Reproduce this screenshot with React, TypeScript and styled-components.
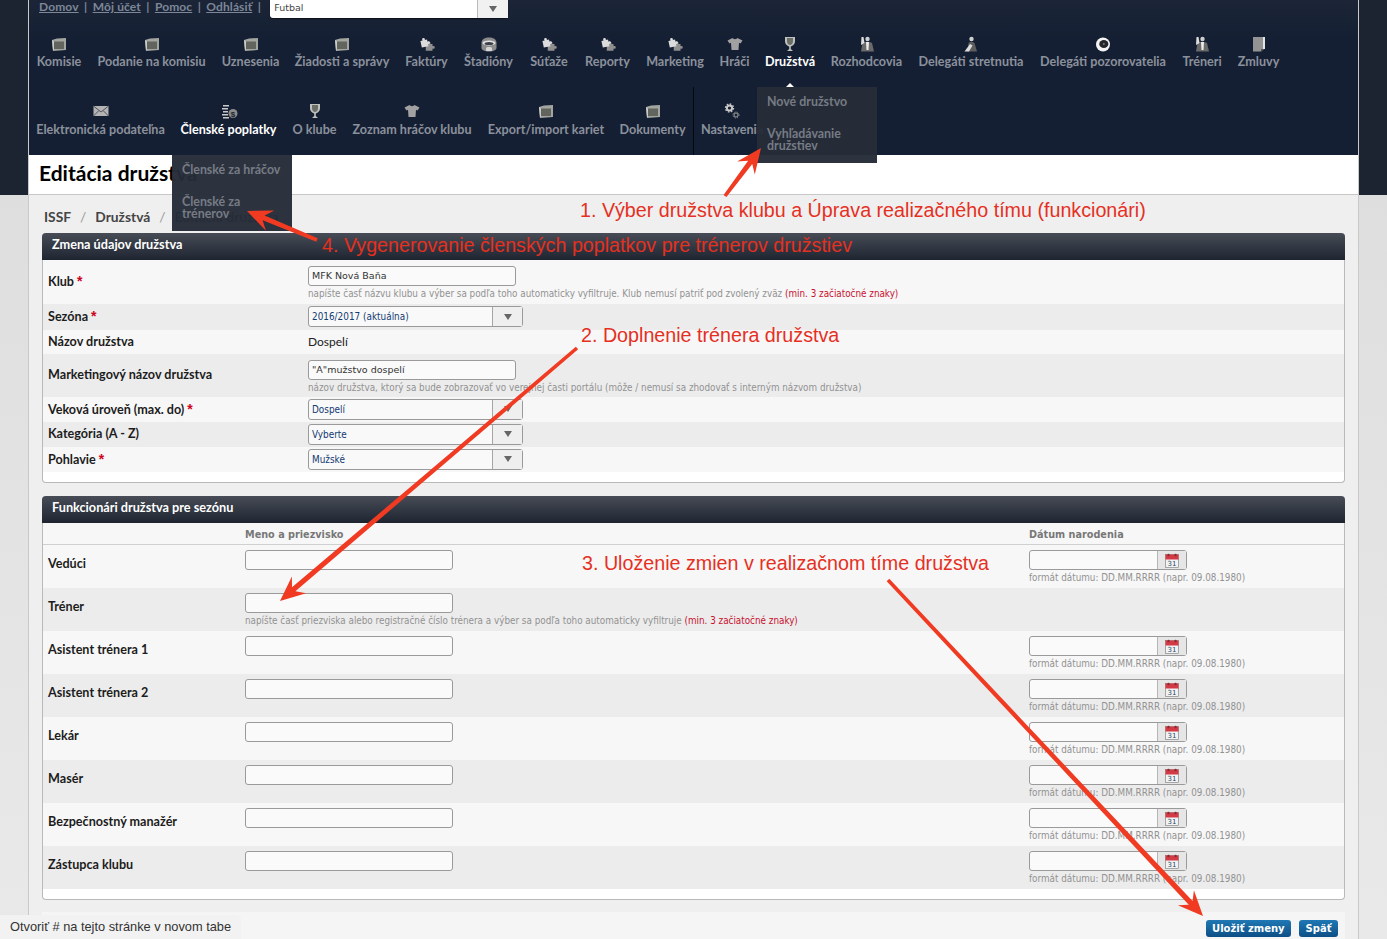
import React from 'react';
import styled, { createGlobalStyle } from 'styled-components';

const Global = createGlobalStyle`
  html, body { margin: 0; padding: 0; height: 939px; overflow: hidden; }
  body { font-family: Lato, "Noto Sans", sans-serif; }
`;

const hintFont = '"DejaVu Sans Condensed", "DejaVu Sans", sans-serif';

const Page = styled.div`
  position: relative;
  width: 1387px;
  height: 939px;
  overflow: hidden;
  background: linear-gradient(#1c2431 0, #1c2431 195px, #dedede 195px, #e9e9e9 100%);
`;

const Container = styled.div`
  width: 1329px;
  height: 939px;
  margin: 0 29px;
  background: #efefef;
  box-shadow: 1px 0 0 #c9c9c9, -1px 0 0 #c9c9c9;
`;

/* header */
const Header = styled.header`
  height: 155px;
  padding-left: 8px;
  background: linear-gradient(#1b2537, #151f33 40px);
  box-sizing: border-box;
`;

const TopBar = styled.div`
  display: flex;
  align-items: flex-start;
  height: 20px;
  padding-left: 2px;
  color: #7d8798;
  font-size: 12px;
  font-weight: 700;
`;

const TopLink = styled.a`
  color: #7d8798;
  text-decoration: underline;
  line-height: 13px;
  letter-spacing: 0.12px;
`;

const TopSep = styled.span`
  width: 14px;
  text-align: center;
  line-height: 13px;
`;

const SportSelect = styled.div`
  display: flex;
  width: 238px;
  height: 18px;
  margin-left: 4px;
  background: #fff;
  border-radius: 0 0 3px 3px;
  color: #444;
  font: 9.5px "DejaVu Sans", sans-serif;
  line-height: 15px;
  box-shadow: 0 1px 1px rgba(0, 0, 0, 0.5);
`;

const SportValue = styled.div`
  flex: 1;
  padding-left: 4px;
`;

const SportArrow = styled.div`
  display: flex;
  align-items: center;
  justify-content: center;
  width: 30px;
  background: #f1f1f1;
  border-left: 1px solid #bbb;
`;

const NavItem = styled.div<{ $w: number; $active?: boolean }>`
  position: relative;
  display: flex;
  flex-direction: column;
  align-items: center;
  flex: none;
  width: ${(p) => p.$w}px;
  color: ${(p) => (p.$active ? '#fff' : '#8b919c')};
  font-size: 12.6px;
  font-weight: 700;
  white-space: nowrap;
`;

const NavIconBox = styled.div<{ $gap: number }>`
  display: flex;
  align-items: center;
  justify-content: center;
  height: 16px;
  margin-bottom: ${(p) => p.$gap}px;
`;

const NavLabel = styled.span`
  line-height: 16px;
`;

const NavRow = styled.nav<{ $h: number }>`
  display: flex;
  gap: 16px;
  height: ${(p) => p.$h}px;
  padding-top: 16px;
  box-sizing: border-box;
`;

const Divider = styled.div`
  flex: none;
  width: 1px;
  height: 68px;
  margin: -16px -8px 0 -8px;
  background: #05080f;
`;

const Caret = styled.div`
  position: absolute;
  left: 21px;
  top: 47px;
  width: 0;
  height: 0;
  border-left: 4px solid transparent;
  border-right: 4px solid transparent;
  border-bottom: 4px solid #fff;
`;

const Dropdown = styled.div<{ $top: number; $h: number }>`
  position: absolute;
  z-index: 5;
  left: -8px;
  top: ${(p) => p.$top}px;
  width: 120px;
  height: ${(p) => p.$h}px;
  padding: 8px 10px 0;
  box-sizing: border-box;
  background: rgba(38, 44, 56, 0.97);
  color: #767b85;
  font-size: 12.4px;
  font-weight: 700;
  white-space: normal;
  text-align: left;
`;

const DropItem = styled.div`
  line-height: 12px;
  margin: 1px 0 20px;
`;

/* title and breadcrumbs */
const TitleBand = styled.div`
  height: 40px;
  padding-left: 10px;
  box-sizing: border-box;
  background: #fff;
  border-bottom: 1px solid #c8c8c8;
  color: #000;
  font-size: 21px;
  font-weight: 700;
  line-height: 36px;
`;

const Body = styled.main`
  padding: 0 13px;
`;

const Crumbs = styled.div`
  display: flex;
  align-items: center;
  gap: 9px;
  height: 38px;
  padding: 4px 0 0 2px;
  box-sizing: border-box;
  color: #444;
  font-size: 13.8px;
  font-weight: 700;
`;

const CrumbSep = styled.span`
  color: #999;
  font-weight: 400;
`;

/* panels */
const Panel = styled.section<{ $mt?: number }>`
  margin-top: ${(p) => p.$mt ?? 0}px;
  padding-bottom: 10px;
  background: #fff;
  border: 1px solid #b9b9b9;
  border-top: 0;
  border-radius: 4px;
`;

const PanelHead = styled.h2`
  height: 27px;
  margin: 0 -1px;
  padding-left: 10px;
  border-radius: 4px 4px 0 0;
  background: linear-gradient(#474c56, #1e2531);
  color: #fff;
  font-size: 12.7px;
  font-weight: 700;
  line-height: 23px;
`;

const FormRow = styled.div<{ $h: number; $alt?: boolean }>`
  display: grid;
  grid-template-columns: 265px 1fr;
  align-items: center;
  height: ${(p) => p.$h}px;
  background: ${(p) => (p.$alt ? '#ececec' : '#f7f7f7')};
`;

const Label = styled.div`
  padding: 0 0 2px 5px;
  color: #1c1c1c;
  font-size: 12.6px;
  font-weight: 700;
`;

const Req = styled.span`
  color: #d0021b;
  font: bold 14px "Liberation Sans", sans-serif;
`;

const FieldStack = styled.div`
  padding-top: 3px;
`;

const Input = styled.div<{ $w: number }>`
  width: ${(p) => p.$w}px;
  height: 20px;
  padding-left: 3px;
  box-sizing: border-box;
  background: #fafafa;
  border: 1px solid #9a9a9a;
  border-radius: 3px;
  color: #333;
  font: 9.5px/18px "DejaVu Sans", sans-serif;
`;

const Hint = styled.div`
  margin-top: 1px;
  color: #929292;
  font: 9.8px/14px ${hintFont};
  white-space: nowrap;
`;

const HintRed = styled.span`
  color: #c8102e;
`;

const Value = styled.div`
  padding-bottom: 2px;
  color: #222;
  font-size: 12px;
`;

const Select = styled.div`
  display: flex;
  width: 215px;
  height: 21px;
  margin-bottom: 1px;
  box-sizing: border-box;
  background: #f9f9f9;
  border: 1px solid #9a9a9a;
  border-radius: 3px;
  color: #123a73;
  font: 9.9px/19px ${hintFont};
`;

const SelectText = styled.div`
  flex: 1;
  padding-left: 3px;
`;

const SelectArrow = styled.div`
  display: flex;
  align-items: center;
  justify-content: center;
  width: 29px;
  background: #efefef;
  border-left: 1px solid #a5a5a5;
`;

const ArrowDown = styled.div`
  width: 0;
  height: 0;
  border-left: 4px solid transparent;
  border-right: 4px solid transparent;
  border-top: 6px solid #666;
`;

/* officials table */
const OfficialsHead = styled.div`
  display: grid;
  grid-template-columns: 202px 784px 1fr;
  height: 22px;
  background: #f7f7f7;
  border-bottom: 1px solid #d0d0d0;
  box-sizing: border-box;
  color: #777;
  font: bold 9.7px/23px "DejaVu Sans", sans-serif;
`;

const OfficialRow = styled.div<{ $alt?: boolean }>`
  display: grid;
  grid-template-columns: 202px 784px 1fr;
  height: 43px;
  padding-top: 5px;
  box-sizing: border-box;
  background: ${(p) => (p.$alt ? '#ececec' : '#f7f7f7')};
`;

const OfficialLabel = styled(Label)`
  padding-top: 6px;
`;

const DateField = styled.div`
  display: flex;
  width: 158px;
  height: 20px;
  box-sizing: border-box;
  background: #fafafa;
  border: 1px solid #9a9a9a;
  border-radius: 3px;
`;

const DateText = styled.div`
  flex: 1;
`;

const DateButton = styled.div`
  display: flex;
  align-items: center;
  justify-content: center;
  width: 28px;
  background: #e6e6e6;
  border-left: 1px solid #b5b5b5;
`;

/* footer */
const Footer = styled.div`
  display: flex;
  justify-content: flex-end;
  gap: 8px;
  height: 27px;
  margin-top: 12px;
  padding: 8px 7px 0 0;
  box-sizing: border-box;
  background: #f5f5f5;
`;

const Button = styled.div`
  height: 17px;
  padding: 0 6.5px;
  background: linear-gradient(#1f78b4, #0d4f86);
  border-radius: 3px;
  color: #fff;
  font: bold 10px/17px "DejaVu Sans", sans-serif;
`;

/* overlays */
const StatusTip = styled.div`
  position: absolute;
  left: 0;
  bottom: 0;
  width: 241px;
  height: 24px;
  padding-left: 10px;
  box-sizing: border-box;
  background: #f2f2f2;
  border-radius: 0 5px 0 0;
  color: #333;
  font: 12.8px/23px "Liberation Sans", sans-serif;
`;

const ArrowLayer = styled.svg`
  position: absolute;
  left: 0;
  top: 0;
  z-index: 10;
  width: 1387px;
  height: 939px;
  pointer-events: none;
`;

const Note = styled.div<{ $x: number; $y: number }>`
  position: absolute;
  z-index: 9;
  left: ${(p) => p.$x}px;
  top: ${(p) => p.$y}px;
  color: #e5301f;
  font: 19.7px/24px "Liberation Sans", Arial, sans-serif;
  white-space: nowrap;
`;

type IconKind =
  | 'folder' | 'puzzle' | 'stadium' | 'shirt' | 'trophy' | 'referee' | 'delegate'
  | 'eye' | 'doc' | 'mail' | 'coins' | 'gears';

const puzzlePiece = 'M1 4 H4 C3.2 2.6 3.8 1 5.5 1 S7.8 2.6 7 4 H10 V7 C11.4 6.2 13 6.8 13 8.5 S11.4 10.8 10 10 V13 H1 Z';

const NavIcon = ({ kind }: { kind: IconKind }) => {
  switch (kind) {
    case 'folder':
      return (
        <svg width="16" height="15" viewBox="0 0 16 15">
          <path d="M1 3 L6 1.5 L15 1 L15 13 L2 14 Z" fill="#a3a5a0" />
          <rect x="3" y="4.5" width="10" height="7.5" fill="#62655d" />
          <path d="M1 3 L3 4.5 L3 12 L2 14 Z" fill="#c9cbc6" />
        </svg>
      );
    case 'puzzle':
      return (
        <svg width="16" height="16" viewBox="0 0 16 16">
          <path d={puzzlePiece} fill="#8f8f8f" transform="translate(6 5) scale(0.75)" />
          <path d={puzzlePiece} fill="#dcdcdc" transform="translate(1 1) rotate(-12 5 5) scale(0.75)" />
        </svg>
      );
    case 'stadium':
      return (
        <svg width="16" height="15" viewBox="0 0 16 15">
          <path d="M0.5 6 C0.5 2 4 0.5 8 0.5 S15.5 2 15.5 6 V11 C15.5 13 12 14.5 8 14.5 S0.5 13 0.5 11 Z" fill="#8b8b8b" />
          <ellipse cx="8" cy="6" rx="6.5" ry="2.5" fill="#e2e2e2" />
          <ellipse cx="8" cy="6.5" rx="4.5" ry="1.6" fill="#3a3f48" />
          <path d="M5 14 V11 C5 9.5 11 9.5 11 11 V14 Z" fill="#d5d5d5" />
        </svg>
      );
    case 'shirt':
      return (
        <svg width="16" height="14" viewBox="0 0 16 14">
          <path d="M5.5 1 C6.5 2.5 9.5 2.5 10.5 1 L15.5 3.5 L13.5 6.5 L12 5.8 L11.5 13 H4.5 L4 5.8 L2.5 6.5 L0.5 3.5 Z" fill="#a1a1a1" />
        </svg>
      );
    case 'trophy':
      return (
        <svg width="14" height="16" viewBox="0 0 14 16">
          <path d="M2 1 H12 V5 C12 9 9 10 7.8 10.5 V13 L10 15 H4 L6.2 13 V10.5 C5 10 2 9 2 5 Z" fill="#bfc1bc" />
          <path d="M4 2 H10 V5 C10 7.5 8.5 9 7 9 S4 7.5 4 5 Z" fill="#6c6f68" />
        </svg>
      );
    case 'referee':
      return (
        <svg width="16" height="16" viewBox="0 0 16 16">
          <circle cx="8.5" cy="3" r="2.2" fill="#cfcfcf" />
          <path d="M2 15.5 L3.5 7 Q8 4.5 13 7 L15 15.5 Z" fill="#6a6a6a" />
          <path d="M7 6 H10 L9.5 14 H7.5 Z" fill="#ececec" />
          <path d="M2 9 L2.5 1 L4.5 1 L5.5 7 Z" fill="#dedede" />
        </svg>
      );
    case 'delegate':
      return (
        <svg width="16" height="16" viewBox="0 0 16 16">
          <circle cx="8.5" cy="3" r="2.2" fill="#d0d0d0" />
          <path d="M4.5 15.5 L5.5 7 Q8 4.5 11.5 7 L14 15.5 Z" fill="#5d5d5d" />
          <path d="M1.5 15.5 L7 8 L9.5 9.5 L6 15.5 Z" fill="#dcdcdc" />
        </svg>
      );
    case 'eye':
      return (
        <svg width="16" height="15" viewBox="0 0 16 15">
          <circle cx="8" cy="7.5" r="7" fill="#f4f4f4" />
          <ellipse cx="8.8" cy="7" rx="4.6" ry="4" fill="#23262b" />
          <circle cx="8.8" cy="7" r="1" fill="#77797c" />
        </svg>
      );
    case 'doc':
      return (
        <svg width="14" height="16" viewBox="0 0 14 16">
          <path d="M1 1 H12 V13 L9 15.5 H1 Z" fill="#949494" />
          <path d="M11 1 H13 V13 H11 Z" fill="#e4e4e4" />
          <path d="M9 15.5 V13 H12 Z" fill="#555" />
        </svg>
      );
    case 'mail':
      return (
        <svg width="16" height="12" viewBox="0 0 16 12">
          <rect x="0.5" y="1" width="15" height="10" fill="#b4b4b4" />
          <path d="M0.5 1 L8 7 L15.5 1 M0.5 11 L6 5.5 M15.5 11 L10 5.5" fill="none" stroke="#50545c" strokeWidth="1" />
        </svg>
      );
    case 'coins':
      return (
        <svg width="18" height="16" viewBox="0 0 18 16">
          <path d="M3 2 H9 V3.5 H3 Z M2 5 H8 V6.5 H2 Z M3 8 H8 V9.5 H3 Z M2 11 H8 V12.5 H2 Z M3 14 H9 V15.5 H3 Z" fill="#c9c9c9" />
          <circle cx="13" cy="10.5" r="4.5" fill="#8a8a8a" />
          <text x="13" y="13.5" fontSize="8" fontWeight="700" fill="#1c2431" textAnchor="middle" fontFamily="Liberation Sans">$</text>
        </svg>
      );
    case 'gears':
      return (
        <svg width="16" height="16" viewBox="0 0 16 16">
          <circle cx="5.5" cy="5" r="2.6" fill="none" stroke="#c9c9c9" strokeWidth="2" />
          <circle cx="5.5" cy="5" r="4" fill="none" stroke="#c9c9c9" strokeWidth="1.4" strokeDasharray="1.6 1.5" />
          <circle cx="12" cy="12" r="2" fill="none" stroke="#9a9a9a" strokeWidth="1" />
          <circle cx="12" cy="12" r="3" fill="none" stroke="#9a9a9a" strokeWidth="1" strokeDasharray="1.2 1.2" />
        </svg>
      );
  }
};

const CalendarIcon = () => (
  <svg width="14" height="15" viewBox="0 0 14 15">
    <rect x="0.5" y="1.5" width="13" height="13" fill="#f2f2f2" stroke="#777" strokeWidth="0.6" />
    <rect x="0.5" y="1.5" width="13" height="5" fill="#d23a45" />
    <circle cx="3.5" cy="2" r="1.2" fill="#8a2a30" />
    <circle cx="10.5" cy="2" r="1.2" fill="#8a2a30" />
    <text x="7" y="13" fontSize="7" fill="#2a4a6a" textAnchor="middle" fontFamily="DejaVu Sans">31</text>
  </svg>
);

// filled arrow with a tail that widens towards the head
const Arrow = ({ from, to }: { from: [number, number]; to: [number, number] }) => {
  const [x1, y1] = from;
  const [x2, y2] = to;
  const len = Math.hypot(x2 - x1, y2 - y1);
  const ux = (x2 - x1) / len;
  const uy = (y2 - y1) / len;
  const at = (along: number, side: number) =>
    `${x1 + ux * along - uy * side},${y1 + uy * along + ux * side}`;
  const points = [
    at(0, 1.8), at(len - 18, 2.6), at(len - 25, 11), at(len, 0),
    at(len - 25, -11), at(len - 18, -2.6), at(0, -1.8),
  ].join(' ');
  return <polygon points={points} fill="#f03a22" />;
};

const row1: { label: string; w: number; icon: IconKind; active?: boolean }[] = [
  { label: 'Komisie', w: 44, icon: 'folder' },
  { label: 'Podanie na komisiu', w: 109, icon: 'folder' },
  { label: 'Uznesenia', w: 57, icon: 'folder' },
  { label: 'Žiadosti a správy', w: 94, icon: 'folder' },
  { label: 'Faktúry', w: 43, icon: 'puzzle' },
  { label: 'Štadióny', w: 49, icon: 'stadium' },
  { label: 'Súťaže', w: 40, icon: 'puzzle' },
  { label: 'Reporty', w: 45, icon: 'puzzle' },
  { label: 'Marketing', w: 58, icon: 'puzzle' },
  { label: 'Hráči', w: 29, icon: 'shirt' },
  { label: 'Družstvá', w: 50, icon: 'trophy', active: true },
  { label: 'Rozhodcovia', w: 71, icon: 'referee' },
  { label: 'Delegáti stretnutia', w: 106, icon: 'delegate' },
  { label: 'Delegáti pozorovatelia', w: 126, icon: 'eye' },
  { label: 'Tréneri', w: 40, icon: 'referee' },
  { label: 'Zmluvy', w: 41, icon: 'doc' },
];

const row2: { label: string; w: number; icon: IconKind; active?: boolean }[] = [
  { label: 'Elektronická podateľna', w: 127, icon: 'mail' },
  { label: 'Členské poplatky', w: 97, icon: 'coins', active: true },
  { label: 'O klube', w: 43, icon: 'trophy' },
  { label: 'Zoznam hráčov klubu', w: 120, icon: 'shirt' },
  { label: 'Export/import kariet', w: 116, icon: 'folder' },
  { label: 'Dokumenty', w: 65, icon: 'folder' },
];

const officials = [
  'Vedúci', 'Tréner', 'Asistent trénera 1', 'Asistent trénera 2',
  'Lekár', 'Masér', 'Bezpečnostný manažér', 'Zástupca klubu',
];

const SelectBox = ({ value }: { value: string }) => (
  <Select>
    <SelectText>{value}</SelectText>
    <SelectArrow><ArrowDown /></SelectArrow>
  </Select>
);

export default function App() {
  return (
    <Page>
      <Global />
      <Container>
        <Header>
          <TopBar>
            <TopLink>Domov</TopLink><TopSep>|</TopSep>
            <TopLink>Môj účet</TopLink><TopSep>|</TopSep>
            <TopLink>Pomoc</TopLink><TopSep>|</TopSep>
            <TopLink>Odhlásiť</TopLink><TopSep>|</TopSep>
            <SportSelect>
              <SportValue>Futbal</SportValue>
              <SportArrow><ArrowDown /></SportArrow>
            </SportSelect>
          </TopBar>
          <NavRow $h={67}>
            {row1.map((item) => (
              <NavItem key={item.label} $w={item.w} $active={item.active}>
                <NavIconBox $gap={2}><NavIcon kind={item.icon} /></NavIconBox>
                <NavLabel>{item.label}</NavLabel>
                {item.active && (
                  <>
                    <Caret />
                    <Dropdown $top={51} $h={76}>
                      <DropItem>Nové družstvo</DropItem>
                      <DropItem>Vyhľadávanie družstiev</DropItem>
                    </Dropdown>
                  </>
                )}
              </NavItem>
            ))}
          </NavRow>
          <NavRow $h={68}>
            {row2.map((item) => (
              <NavItem key={item.label} $w={item.w} $active={item.active}>
                <NavIconBox $gap={3}><NavIcon kind={item.icon} /></NavIconBox>
                <NavLabel>{item.label}</NavLabel>
                {item.active && (
                  <Dropdown $top={52} $h={76}>
                    <DropItem>Členské za hráčov</DropItem>
                    <DropItem>Členské za trénerov</DropItem>
                  </Dropdown>
                )}
              </NavItem>
            ))}
            <Divider />
            <NavItem $w={60}>
              <NavIconBox $gap={3}><NavIcon kind="gears" /></NavIconBox>
              <NavLabel>Nastavenia</NavLabel>
            </NavItem>
          </NavRow>
        </Header>

        <TitleBand>Editácia družstva</TitleBand>

        <Body>
          <Crumbs>
            <span>ISSF</span><CrumbSep>/</CrumbSep>
            <span>Družstvá</span><CrumbSep>/</CrumbSep>
            <span>Editácia družstva</span>
          </Crumbs>

          <Panel>
            <PanelHead>Zmena údajov družstva</PanelHead>
            <FormRow $h={44}>
              <Label>Klub <Req>*</Req></Label>
              <FieldStack>
                <Input $w={208}>MFK Nová Baňa</Input>
                <Hint>napíšte časť názvu klubu a výber sa podľa toho automaticky vyfiltruje. Klub nemusí patriť pod zvolený zväz <HintRed>(min. 3 začiatočné znaky)</HintRed></Hint>
              </FieldStack>
            </FormRow>
            <FormRow $h={26} $alt>
              <Label>Sezóna <Req>*</Req></Label>
              <SelectBox value="2016/2017 (aktuálna)" />
            </FormRow>
            <FormRow $h={24}>
              <Label>Názov družstva</Label>
              <Value>Dospelí</Value>
            </FormRow>
            <FormRow $h={43} $alt>
              <Label>Marketingový názov družstva</Label>
              <FieldStack>
                <Input $w={208}>"A"mužstvo dospelí</Input>
                <Hint>názov družstva, ktorý sa bude zobrazovať vo verejnej časti portálu (môže / nemusí sa zhodovať s interným názvom družstva)</Hint>
              </FieldStack>
            </FormRow>
            <FormRow $h={25}>
              <Label>Veková úroveň (max. do) <Req>*</Req></Label>
              <SelectBox value="Dospelí" />
            </FormRow>
            <FormRow $h={25} $alt>
              <Label>Kategória (A - Z)</Label>
              <SelectBox value="Vyberte" />
            </FormRow>
            <FormRow $h={25}>
              <Label>Pohlavie <Req>*</Req></Label>
              <SelectBox value="Mužské" />
            </FormRow>
          </Panel>

          <Panel $mt={13}>
            <PanelHead>Funkcionári družstva pre sezónu</PanelHead>
            <OfficialsHead>
              <span />
              <span>Meno a priezvisko</span>
              <span>Dátum narodenia</span>
            </OfficialsHead>
            {officials.map((name, i) => (
              <OfficialRow key={name} $alt={i % 2 === 1}>
                <OfficialLabel>{name}</OfficialLabel>
                <div>
                  <Input $w={208} />
                  {name === 'Tréner' && (
                    <Hint>napíšte časť priezviska alebo registračné číslo trénera a výber sa podľa toho automaticky vyfiltruje <HintRed>(min. 3 začiatočné znaky)</HintRed></Hint>
                  )}
                </div>
                {name !== 'Tréner' && (
                  <div>
                    <DateField>
                      <DateText />
                      <DateButton><CalendarIcon /></DateButton>
                    </DateField>
                    <Hint>formát dátumu: DD.MM.RRRR (napr. 09.08.1980)</Hint>
                  </div>
                )}
              </OfficialRow>
            ))}
          </Panel>

          <Footer>
            <Button>Uložiť zmeny</Button>
            <Button>Späť</Button>
          </Footer>
        </Body>
      </Container>

      <Note $x={580} $y={198}>1. Výber družstva klubu a Úprava realizačného tímu (funkcionári)</Note>
      <Note $x={322} $y={233}>4. Vygenerovanie členských poplatkov pre trénerov družstiev</Note>
      <Note $x={581} $y={323}>2. Doplnenie trénera družstva</Note>
      <Note $x={582} $y={551}>3. Uloženie zmien v realizačnom tíme družstva</Note>

      <ArrowLayer viewBox="0 0 1387 939">
        <Arrow from={[725, 196]} to={[761, 148]} />
        <Arrow from={[317, 240]} to={[247, 211]} />
        <Arrow from={[577, 348]} to={[280, 601]} />
        <Arrow from={[888, 580]} to={[1203, 916]} />
      </ArrowLayer>

      <StatusTip>Otvoriť # na tejto stránke v novom tabe</StatusTip>
    </Page>
  );
}
